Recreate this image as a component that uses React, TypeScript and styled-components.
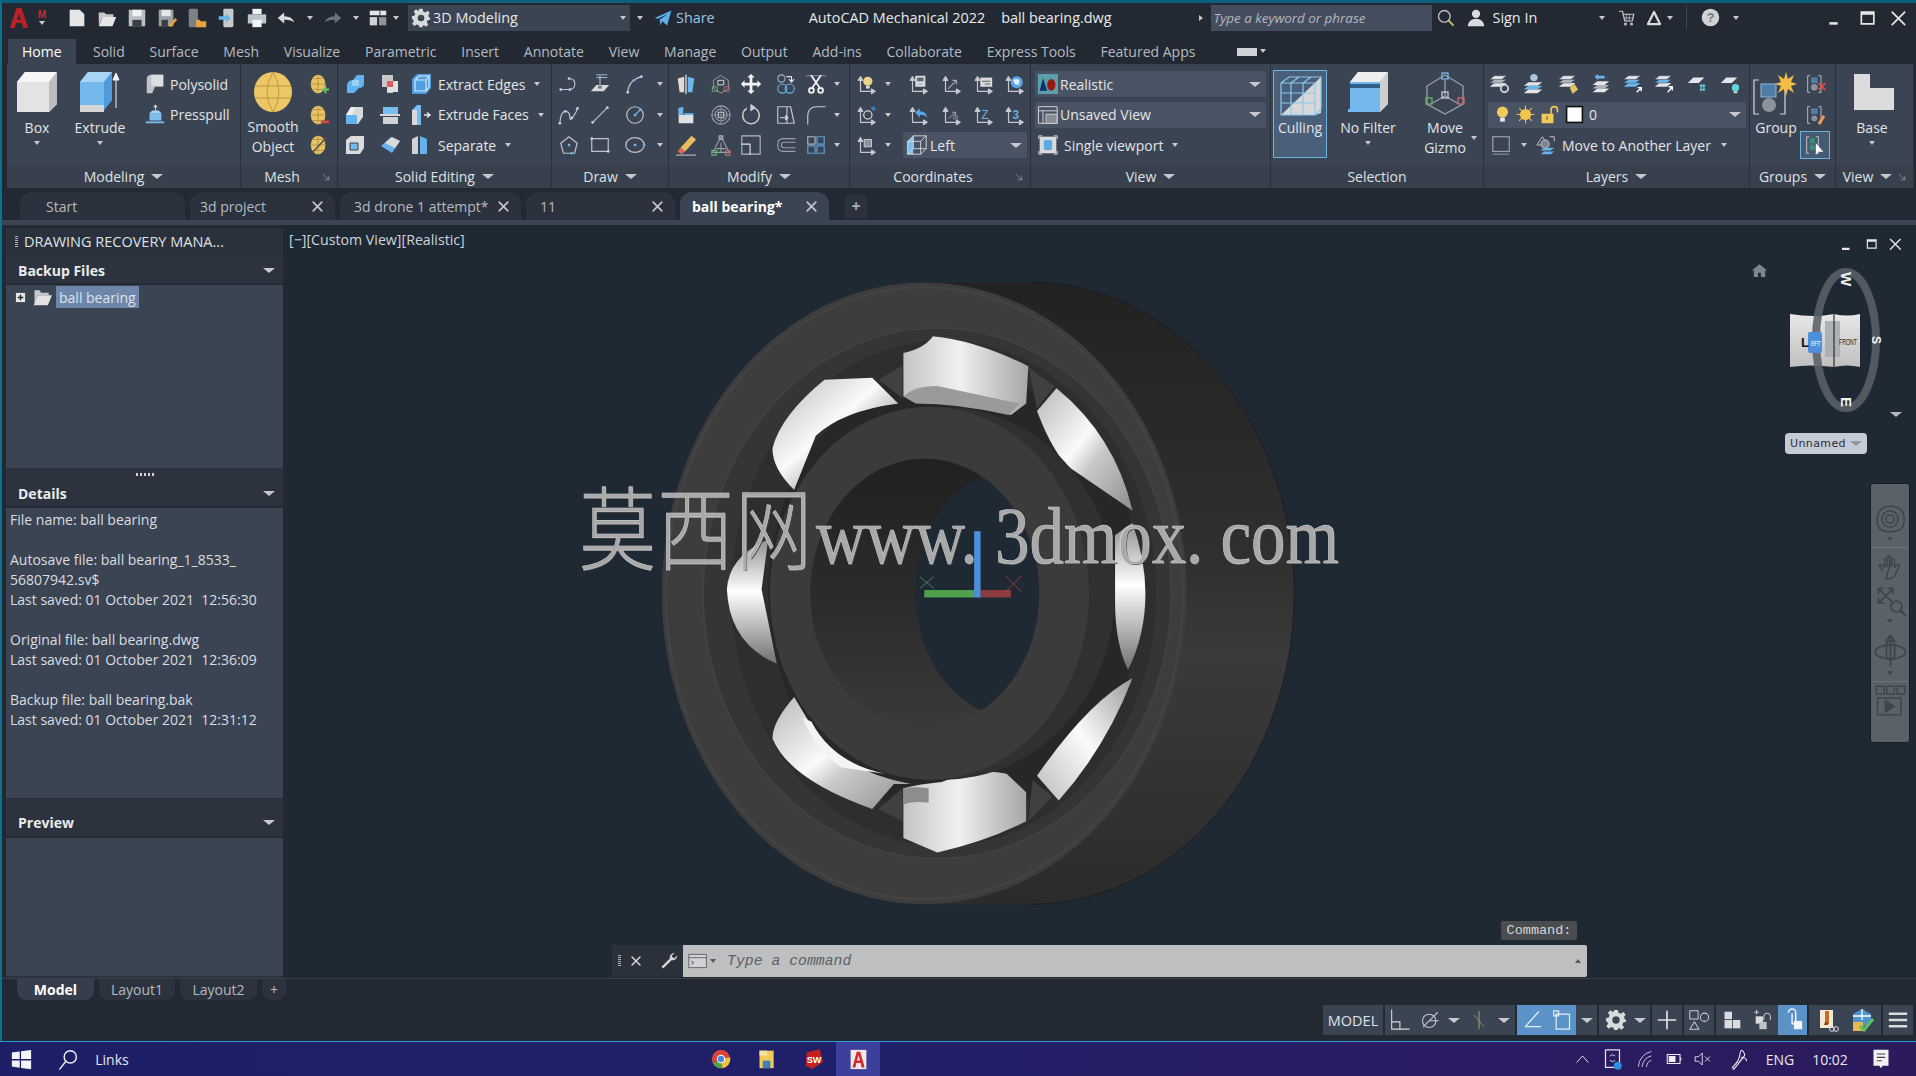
import React from "react";
import styled, { createGlobalStyle } from "styled-components";

const GlobalStyle = createGlobalStyle`
  html, body {
    margin: 0;
    padding: 0;
    background: #222933;
    overflow: hidden;
  }
  * {
    box-sizing: border-box;
  }
`;

const UI_FONT = `"Open Sans", "Noto Sans", "Liberation Sans", sans-serif`;

const Window = styled.div`
  width: 1916px;
  height: 1076px;
  display: flex;
  flex-direction: column;
  background: #222933;
  font-family: ${UI_FONT};
  font-size: 14px;
  color: #dfe2e6;
  overflow: hidden;
`;
const Frame = styled.div`
  height: 1041px;
  display: flex;
  flex-direction: column;
  border-top: 3px solid #0d5f80;
  border-left: 2px solid #0f6f8e;
`;

/* title bar */
const TitleBar = styled.div`
  height: 29px;
  display: flex;
  align-items: center;
  flex-shrink: 0;
`;
const Gap = styled.span<{ $w: number }>`
  width: ${(p) => p.$w}px;
  flex-shrink: 0;
`;
const VGap = styled.div<{ $h: number }>`
  height: ${(p) => p.$h}px;
  flex-shrink: 0;
`;
const Slot = styled.span<{ $w: number }>`
  width: ${(p) => p.$w}px;
  height: 24px;
  flex-shrink: 0;
  display: flex;
  align-items: center;
  justify-content: center;
`;
const Caret = styled.i<{ $c?: string; $big?: boolean }>`
  display: inline-block;
  flex-shrink: 0;
  border-left: ${(p) => (p.$big ? 6 : 3.5)}px solid transparent;
  border-right: ${(p) => (p.$big ? 6 : 3.5)}px solid transparent;
  border-top: ${(p) => (p.$big ? 5 : 4)}px solid ${(p) => p.$c || "#c6c9cd"};
`;
const RightCaret = styled(Caret)`
  transform: rotate(-90deg);
`;
const LogoMark = styled.span`
  width: 26px;
  display: flex;
  flex-direction: column;
  align-items: center;
  gap: 1px;
  flex-shrink: 0;
`;
const LogoLetter = styled.span`
  font-family: "Liberation Sans", sans-serif;
  font-size: 10px;
  line-height: 10px;
  font-weight: 700;
  color: #c8282e;
`;
const WorkspaceBox = styled.div`
  width: 222px;
  height: 26px;
  display: flex;
  align-items: center;
  padding: 0 4px 0 3px;
  background: #3b4453;
  color: #e6e8ea;
  font-size: 14.4px;
`;
const TitleText = styled.span`
  font-size: 14.4px;
  color: #e8eaec;
  white-space: nowrap;
`;
const TitleSeparator = styled.span`
  width: 1px;
  height: 24px;
  flex-shrink: 0;
  background: #3b4453;
`;
const SearchBox = styled.div`
  width: 221px;
  height: 26px;
  display: flex;
  align-items: center;
  padding-left: 3px;
  background: #444d5e;
  font-style: italic;
  font-size: 13.4px;
  color: #b4b9c0;
`;
const ShareText = styled.span`
  color: #9cc4e4;
  font-size: 14.4px;
`;

/* ribbon tabs */
const RibbonTabs = styled.div`
  height: 32px;
  display: flex;
  align-items: flex-end;
  padding-left: 6px;
  flex-shrink: 0;
`;
const RibbonTab = styled.div<{ $active?: boolean }>`
  height: 25px;
  display: flex;
  align-items: center;
  font-size: 14px;
  white-space: nowrap;
  margin-right: ${(p) => (p.$active ? 5 : 0)}px;
  padding: 0 ${(p) => (p.$active ? 14 : 12.4)}px;
  background: ${(p) => (p.$active ? "#3b4453" : "transparent")};
  color: ${(p) => (p.$active ? "#ffffff" : "#b5bac2")};
`;
const CollapseSlot = styled(Slot)`
  margin-left: 26px;
`;
const CollapseBox = styled.span`
  width: 20px;
  height: 8px;
  display: block;
  background: #cfd1d4;
`;
const CollapseCaret = styled(Caret)`
  align-self: center;
  margin-top: 6px;
`;

/* ribbon */
const Ribbon = styled.div`
  height: 124px;
  display: flex;
  padding-left: 5px;
  flex-shrink: 0;
`;
const Panel = styled.div<{ $w: number }>`
  width: ${(p) => p.$w}px;
  flex-shrink: 0;
  display: flex;
  flex-direction: column;
  background: #3b4453;
  border-right: 1px solid #2a303b;
`;
const PanelBody = styled.div`
  height: 101px;
  display: flex;
  overflow: visible;
`;
const PanelRows = styled.div<{ $w?: number; $pl?: number }>`
  display: flex;
  flex-direction: column;
  padding-top: 5px;
  padding-left: ${(p) => p.$pl || 0}px;
  width: ${(p) => (p.$w ? p.$w + "px" : "100%")};
  flex-shrink: 0;
`;
const Row = styled.div`
  height: 30.5px;
  display: flex;
  align-items: center;
  white-space: nowrap;
`;
const RowLabel = styled.span<{ $ml?: number; $mr?: number }>`
  font-size: 14px;
  color: #e2e4e7;
  margin-left: ${(p) => p.$ml || 0}px;
  margin-right: ${(p) => p.$mr || 0}px;
`;
const PanelFooter = styled.div<{ $launcher?: boolean }>`
  position: relative;
  height: 23px;
  display: flex;
  align-items: center;
  justify-content: center;
  gap: 7px;
  padding-right: ${(p) => (p.$launcher ? 14 : 0)}px;
  font-size: 14px;
  color: #dfe2e5;
  background: #38404e;
`;
const Launcher = styled.span`
  position: absolute;
  right: 6px;
  top: 8px;
  display: flex;
`;
const BigButton = styled.div<{ $w: number; $ml?: number }>`
  width: ${(p) => p.$w}px;
  margin-left: ${(p) => p.$ml || 0}px;
  flex-shrink: 0;
  display: flex;
  flex-direction: column;
  align-items: center;
  padding-top: 8px;
  font-size: 14px;
  line-height: 20px;
  color: #e2e4e7;
  text-align: center;
`;
const BigLabel = styled.div<{ $mt?: number }>`
  margin-top: ${(p) => p.$mt ?? 6}px;
  margin-bottom: 3px;
`;
const CullingButton = styled(BigButton)`
  height: 88px;
  margin-top: 6px;
  padding-top: 2px;
  background: #4a5f7a;
  border: 1px solid #6db3e0;
`;
const GizmoCaret = styled(Caret)`
  margin: 72px 0 0 -10px;
`;
const Combo = styled.div<{ $w: number; $ml?: number }>`
  width: ${(p) => p.$w}px;
  margin-left: ${(p) => p.$ml || 0}px;
  height: 26px;
  flex-shrink: 0;
  display: flex;
  align-items: center;
  padding: 0 5px 0 3px;
  background: #4a5363;
  border-radius: 2px;
  font-size: 14px;
  color: #e4e6e9;
`;
const ComboText = styled.span`
  flex: 1;
  margin-left: 2px;
`;
const SelectedBox = styled.span`
  width: 30px;
  height: 28px;
  margin-left: -2px;
  display: flex;
  align-items: center;
  justify-content: center;
  border: 1px solid #6db3e0;
  background: #465a74;
`;
const ViewportSlot = styled(Slot)`
  margin-left: 3px;
`;

/* document tabs */
const DocBar = styled.div`
  height: 37px;
  flex-shrink: 0;
  display: flex;
  gap: 5px;
  padding: 4px 0 0 18px;
  border-bottom: 5px solid #3b4453;
`;
const DocTab = styled.div<{ $w: number; $pl: number; $active?: boolean }>`
  width: ${(p) => p.$w}px;
  height: 28px;
  padding: 0 11px 0 ${(p) => p.$pl}px;
  display: flex;
  align-items: center;
  justify-content: space-between;
  border-radius: 12px 12px 0 0;
  white-space: nowrap;
  font-size: 14px;
  font-weight: ${(p) => (p.$active ? 700 : 400)};
  color: ${(p) => (p.$active ? "#ffffff" : "#b5bac2")};
  background: ${(p) => (p.$active ? "#3b4453" : "#2b323d")};
`;
const AddTab = styled.div`
  width: 22px;
  height: 24px;
  margin: 2px 0 0 11px;
  display: flex;
  align-items: center;
  justify-content: center;
  border-radius: 8px 8px 0 0;
  background: #2b323d;
  color: #aab0b8;
  font-weight: 700;
  font-size: 16px;
`;

/* main area */
const Main = styled.div`
  height: 753px;
  flex-shrink: 0;
  display: flex;
`;
const SidePanel = styled.div`
  width: 277px;
  margin: 3px 4px 0 4px;
  flex-shrink: 0;
  display: flex;
  flex-direction: column;
  background: #2c333e;
`;
const PanelTitle = styled.div`
  height: 27px;
  display: flex;
  align-items: center;
  gap: 6px;
  padding-left: 9px;
  margin-bottom: 3px;
  font-size: 14.5px;
  color: #dfe2e5;
  background: #2a313c;
`;
const Grip = styled.span`
  width: 3px;
  height: 12px;
  flex-shrink: 0;
  background: repeating-linear-gradient(#aeb2b8 0 1px, transparent 1px 2px);
`;
const SectionHeader = styled.div<{ $h: number }>`
  height: ${(p) => p.$h}px;
  flex-shrink: 0;
  display: flex;
  align-items: center;
  justify-content: space-between;
  padding: 0 8px 0 12px;
  font-weight: 700;
  font-size: 14px;
  color: #e9ebed;
  background: #2c333e;
`;
const SectionBody = styled.div<{ $h: number }>`
  height: ${(p) => p.$h}px;
  flex-shrink: 0;
  background: #3b4453;
  border-top: 2px solid #252b35;
`;
const TreeRow = styled.div`
  display: flex;
  align-items: center;
  height: 24px;
  padding-left: 9px;
`;
const TreeSelected = styled.span`
  height: 22px;
  padding: 0 3px;
  margin-left: 4px;
  display: flex;
  align-items: center;
  background: #6e86a9;
  color: #dde2e9;
`;
const Sash = styled.div`
  height: 12px;
  flex-shrink: 0;
  display: flex;
  align-items: center;
  justify-content: center;
  background: #2c333e;
  gap: 2px;
`;
const SashDot = styled.i`
  width: 2px;
  height: 3px;
  background: #d3d6da;
`;
const DetailLine = styled.div`
  min-height: 20px;
  line-height: 20px;
  padding-left: 4px;
  font-size: 14px;
  color: #dadde1;
  white-space: pre;
`;
const DetailsText = styled.div`
  padding: 2px 0 0 0;
`;

/* viewport */
const Viewport = styled.div`
  position: relative;
  flex: 1;
  background: #1f2934;
  overflow: hidden;
`;
const ViewLabel = styled.div`
  position: absolute;
  left: 2px;
  top: 5px;
  font-size: 14.2px;
  color: #d0d4d9;
`;
const BearingWrap = styled.div`
  position: absolute;
  left: 351px;
  top: 45px;
  width: 690px;
  height: 650px;
`;
const Watermark = styled.div`
  position: absolute;
  left: 292px;
  top: 243px;
  display: flex;
  align-items: baseline;
  white-space: pre;
  font-family: "Liberation Serif", "Noto Sans CJK SC", serif;
  color: rgba(205, 205, 205, 0.72);
  -webkit-text-stroke: 0.5px #d4d4d4;
  text-shadow: 1px 1px 0 #4b4b4b;
  transform: scaleY(1.18);
`;
const WatermarkCjk = styled.span`
  font-size: 77px;
  font-weight: 300;
  letter-spacing: 1px;
`;
const WatermarkLatin = styled.span`
  font-size: 68.8px;
  margin-left: 3px;
`;
const ViewportControls = styled.div`
  position: absolute;
  right: 13px;
  top: 10px;
  display: flex;
  gap: 8px;
  align-items: center;
`;
const HomeIcon = styled.div`
  position: absolute;
  left: 1464px;
  top: 37px;
`;
const CubeWrap = styled.div`
  position: absolute;
  left: 1498px;
  top: 39px;
`;
const Unnamed = styled.div`
  position: absolute;
  left: 1498px;
  top: 208px;
  width: 82px;
  height: 21px;
  display: flex;
  align-items: center;
  justify-content: space-between;
  padding: 0 5px;
  background: #c6cad6;
  border-radius: 4px;
  font-family: "DejaVu Sans", sans-serif;
  font-size: 11px;
  letter-spacing: 0.4px;
  color: #2b2f38;
`;
const CubeMenu = styled.div`
  position: absolute;
  left: 1603px;
  top: 177px;
`;
const NavBar = styled.div`
  position: absolute;
  left: 1583px;
  top: 258px;
  width: 40px;
  height: 260px;
  display: flex;
  flex-direction: column;
  align-items: center;
  padding-top: 21px;
  background: #596169;
  border: 1px solid #161c23;
  border-radius: 3px;
`;
const NavSeparator = styled.div<{ $mb: number }>`
  width: 100%;
  height: 1px;
  flex-shrink: 0;
  margin: 2px 0 ${(p) => p.$mb}px;
  background: #6a727a;
`;
const NavCaret = styled.div`
  height: 12px;
  flex-shrink: 0;
  display: flex;
  align-items: center;
`;
const CommandHint = styled.div`
  position: absolute;
  left: 1214px;
  top: 696px;
  width: 76px;
  height: 19px;
  display: flex;
  align-items: center;
  justify-content: center;
  background: #4a4d50;
  border-radius: 2px;
  font-family: "Liberation Mono", monospace;
  font-size: 13.5px;
  color: #d4d6d8;
`;
const CommandLine = styled.div`
  position: absolute;
  left: 325px;
  top: 720px;
  width: 975px;
  height: 32px;
  display: flex;
`;
const CommandHandle = styled.div`
  width: 71px;
  display: flex;
  align-items: center;
  padding-left: 6px;
  gap: 7px;
  background: #2a313b;
`;
const CommandInput = styled.div`
  flex: 1;
  display: flex;
  align-items: center;
  padding: 0 6px 0 5px;
  background: #bdbfc1;
  font-family: "Liberation Mono", monospace;
  font-style: italic;
  font-size: 14.8px;
  color: #5c5f63;
  border-radius: 0 2px 2px 0;
`;
const UpCaret = styled(Caret)`
  margin-left: auto;
  transform: rotate(180deg);
`;

/* bottom */
const BottomBar = styled.div`
  height: 63px;
  flex-shrink: 0;
  display: flex;
  justify-content: space-between;
  border-top: 1px solid #39404b;
`;
const LayoutTabs = styled.div`
  display: flex;
  gap: 5px;
  padding: 0 0 0 15px;
  height: 23px;
`;
const LayoutTab = styled.div<{ $active?: boolean; $w: number }>`
  width: ${(p) => p.$w}px;
  height: 21px;
  display: flex;
  align-items: center;
  justify-content: center;
  border-radius: 0 0 9px 9px;
  font-size: 14px;
  font-weight: ${(p) => (p.$active ? 700 : 400)};
  color: ${(p) => (p.$active ? "#ffffff" : "#b5bac2")};
  background: ${(p) => (p.$active ? "#363e4c" : "#2c333e")};
`;
const StatusBar = styled.div`
  display: flex;
  gap: 2px;
  height: 30px;
  margin: 26px 3px 0 0;
`;
const StatusGroup = styled.div<{ $w: number }>`
  width: ${(p) => p.$w}px;
  display: flex;
  align-items: center;
  background: #3b4453;
`;
const StatusButton = styled.span<{ $w: number; $active?: boolean }>`
  width: ${(p) => p.$w}px;
  height: 30px;
  flex-shrink: 0;
  display: flex;
  align-items: center;
  justify-content: center;
  font-size: 14.5px;
  background: ${(p) => (p.$active ? "#5b93c9" : "transparent")};
`;

/* taskbar */
const Taskbar = styled.div`
  height: 35px;
  flex-shrink: 0;
  display: flex;
  align-items: center;
  border-top: 1px solid #2f9bdc;
  background: linear-gradient(90deg, #1c1f66 0%, #20206a 45%, #2a1b63 75%, #2c1a5c 100%);
  color: #e8e8f0;
`;
const TaskActive = styled.span`
  width: 44px;
  height: 34px;
  display: flex;
  align-items: center;
  justify-content: center;
  background: #3d3f9c;
`;
const TrayText = styled.span<{ $w: number }>`
  width: ${(p) => p.$w}px;
  font-size: 14px;
  text-align: center;
  flex-shrink: 0;
`;
const IconSvg = styled.svg`
  display: block;
  overflow: visible;
  flex-shrink: 0;
`;

/* icon drawings */
const L: React.FC<{ c?: string; w?: number; children: React.ReactNode }> = ({ c = "#c0c4ca", w = 1.3, children }) => (
  <g fill="none" stroke={c} strokeWidth={w} strokeLinecap="round" strokeLinejoin="round">
    {children}
  </g>
);
const B = "#6bb5ea";
const W = "#e3e5e7";
const G = "#aeb3ba";
const Y = "#e7c463";
const Dot = ({ x, y, c = "#b9d4ea" }: { x: number; y: number; c?: string }) => <circle cx={x} cy={y} r="1.5" fill={c} stroke="none" />;

const Axes = (
  <L c="#c5c9ce" w={1.3}>
    <path d="M6 6V20H20" />
    <path d="M3.5 8 6 4 8.5 8Z M18 17.5 22 20 18 22.5Z" fill="#c5c9ce" />
  </L>
);
const Stack = ({ c1 = W, c2 = G, c3 = W }: { c1?: string; c2?: string; c3?: string }) => (
  <>
    <path d="M2 15 7 11H20L15 15Z" fill={c3} />
    <path d="M2 11 7 7H20L15 11Z" fill={c2} stroke="#3b4453" strokeWidth=".5" />
    <path d="M2 7 7 3H20L15 7Z" fill={c1} stroke="#3b4453" strokeWidth=".5" />
  </>
);
const Mesh = ({ badge }: { badge?: React.ReactNode }) => (
  <>
    <ellipse cx="11" cy="12" rx="8" ry="10" fill={Y} />
    <L c="#a9873a" w={0.8}>
      <path d="M11 2V22M3 12H19M5 6H17M5 18H17" />
    </L>
    {badge}
  </>
);

const ICONS: Record<string, React.ReactNode> = {
  fnew: <path d="M4 3H15L20 8V21H4Z" fill="#e6e6e6" />,
  fopen: (
    <>
      <path d="M3 6H9L11 8H19V11H7L3 20Z" fill="#c9c9c9" />
      <path d="M7 11H22L18 21H3Z" fill="#e6e6e6" />
    </>
  ),
  fsave: (
    <>
      <path d="M3 3H21V21H3Z" fill="#bdbfc2" />
      <path d="M7 3H17V10H7Z" fill="#f0f0f0" />
      <path d="M7 14H17V21H7Z" fill="#3a3f47" />
    </>
  ),
  fsaveas: (
    <>
      <path d="M3 3H19V21H3Z" fill="#9ea2a7" />
      <path d="M6 3H16V10H6Z" fill="#e6e6e6" />
      <path d="M6 14H13V21H6Z" fill="#3a3f47" />
      <path d="M14 20 21 12 23 14 16 22Z" fill="#e8a33c" />
    </>
  ),
  fcloud: (
    <>
      <rect x="3" y="2" width="10" height="20" rx="1.5" fill="#7c8087" />
      <path d="M11 14H15L16 15.5H22V22H11Z" fill="#e8a33c" />
    </>
  ),
  fimport: (
    <>
      <rect x="8" y="2" width="11" height="20" rx="1.5" fill="#c9c9c9" />
      <path d="M3 10H11V7L16 12L11 17V14H3Z" fill={B} />
    </>
  ),
  fprint: (
    <>
      <path d="M7 2H17V8H7Z" fill="#f0f0f0" />
      <path d="M2 8H22V18H2Z" fill="#bcc4cc" />
      <path d="M7 14H17V22H7Z" fill="#f4f4f4" />
    </>
  ),
  undo: <path d="M3 12 10 6V10Q19 10 21 17Q17 13.5 10 14V18Z" fill="#d7dadd" />,
  redo: <path d="M21 12 14 6V10Q5 10 3 17Q7 13.5 14 14V18Z" fill="#6c727a" />,
  wspace: (
    <>
      <path d="M3 4H21V9H3Z" fill="#e3e5e7" />
      <path d="M3 11H11V20H3Z" fill="#d0d2d5" />
      <path d="M13 11H21V20H13Z" fill="#8e939a" />
      <path d="M14 4 14 9" stroke="#333" />
    </>
  ),
  gear: (
    <>
      <path
        d="M10 1H14L14.6 4.2 17.2 5.3 19.9 3.4 22.6 6.1 20.7 8.8 21.8 11.4 23 12 23 14 20 14.6 18.9 17.2 20.8 19.9 18.1 22.6 15.4 20.7 14 21.4 14 23H10L9.4 20.8 6.8 19.7 4.1 21.6 1.4 18.9 3.3 16.2 2.2 13.6 1 13V10L4 9.4 5.1 6.8 3.2 4.1 5.9 1.4 8.6 3.3 9.4 3Z"
        fill="#d8dadc"
      />
      <circle cx="12" cy="12" r="4" fill="#3b4453" />
    </>
  ),
  plane: <path d="M2 12 22 3 17 21 11 16 9 21 8 14 18 7 6 13Z" fill="#5fb0e6" />,
  search: (
    <>
      <circle cx="10" cy="10" r="7" fill="none" stroke="#b9bec4" strokeWidth="1.6" />
      <path d="M15 15 21 21" stroke="#d5b35a" strokeWidth="2.2" />
    </>
  ),
  user: (
    <>
      <circle cx="12" cy="7" r="5" fill="#d9dbde" />
      <path d="M2 22Q3 13 12 13T22 22Z" fill="#d9dbde" />
    </>
  ),
  cart: (
    <L c="#c4c7cb" w={1.6}>
      <path d="M2 3H6L9 16H19L21 7H7" />
      <path d="M9 12H20M11 7V16M15 7V16" strokeWidth="1" />
      <circle cx="10" cy="20" r="1.3" />
      <circle cx="18" cy="20" r="1.3" />
    </L>
  ),
  a360: (
    <L c="#d9dbde" w={3}>
      <path d="M12 4 4 20H20Z" />
    </L>
  ),
  help: (
    <>
      <circle cx="12" cy="12" r="10" fill="#cfd1d4" />
      <text x="12" y="17" textAnchor="middle" fontSize="14" fontWeight="700" fontFamily="Liberation Sans" fill="#777">
        ?
      </text>
    </>
  ),
  winMin: <path d="M4 17H14V20H4Z" fill="#e8e8e8" />,
  winMax: <path d="M3 4H20V20H3Z M5 8V18H18V8Z" fill="#e8e8e8" fillRule="evenodd" />,
  winClose: (
    <L c="#e8e8e8" w={2}>
      <path d="M5 5 20 20M20 5 5 20" />
    </L>
  ),
  tabClose: (
    <L c="#c5c9ce" w={3}>
      <path d="M4 4 20 20M20 4 4 20" />
    </L>
  ),
  polysolid: (
    <>
      <path d="M3 22V7Q3 2 8 2H21V15H12L9 22Z" fill="#bfc3c7" />
      <path d="M8 2H21V14H11Q8 14 8 10Z" fill="#dedfe1" />
    </>
  ),
  presspull: (
    <>
      <path d="M6 10H19V18H6Z" fill="#7fbdec" />
      <path d="M9 7H16L19 10H6Z" fill="#a8d4f3" />
      <path d="M12.5 1V7M10.5 4 12.5 1 14.5 4" stroke="#e6e6e6" fill="none" />
      <path d="M2 20H22" stroke="#7fbdec" strokeWidth="2" />
    </>
  ),
  meshAdd: <Mesh badge={<path d="M15 17H18V14H20V17H23V19H20V22H18V19H15Z" fill="#6fc55c" />} />,
  meshSub: <Mesh badge={<path d="M14 18H23V21H14Z" fill="#d0494a" />} />,
  meshEdit: (
    <Mesh
      badge={
        <L c="#4a4f58" w={1.6}>
          <path d="M5 20 20 4" />
        </L>
      }
    />
  ),
  se1: (
    <>
      <path d="M4 14Q4 8 10 8L14 3H21V12Q21 16 16 16L11 21H4Z" fill="#63b3f0" />
      <path d="M9 8H16V14H9Z" fill="#9cd0f5" />
    </>
  ),
  se2: (
    <>
      <path d="M4 3H15V21H9V15H4Z" fill="#c9c9c9" />
      <path d="M9 9H20V20H9Z" fill="#e0e0e0" />
      <path d="M9 9H15V15H9Z" fill="#e05a5a" />
    </>
  ),
  se3: (
    <>
      <path d="M3 12 8 4H20V14L15 21H3Z" fill="#d8d8d8" />
      <path d="M3 12H14V21H3Z" fill="#63b3f0" />
      <path d="M3 12 8 4H12L9 12Z" fill="#eeeeee" />
    </>
  ),
  se4: (
    <>
      <path d="M5 4H20V11H5Z" fill="#76bdf2" />
      <path d="M2 12H22" stroke="#d8d8d8" strokeWidth="2" />
      <path d="M5 14H20V21H5Z" fill="#cfd3d8" />
    </>
  ),
  se5: (
    <>
      <path d="M3 7 8 3H21V15L17 21H3Z" fill="#dcdcdc" />
      <path d="M7 10H15V17H7Z" fill="#73b9ee" stroke="#3b4453" />
    </>
  ),
  se6: (
    <>
      <path d="M3 13 13 4 22 8 14 20Z" fill="#66b2ec" />
      <path d="M7 10 14 4 22 8 17 15Z" fill="#dadada" />
    </>
  ),
  extract: (
    <>
      <path d="M3 7 8 2H22V16L17 22H3Z" fill="#4f9ee0" />
      <L c="#d2e7f8" w={1.2}>
        <path d="M6 8H17V19H6ZM6 8 10 4H20V15L17 19M17 8 20 4" />
      </L>
    </>
  ),
  extfaces: (
    <>
      <path d="M3 22V7L8 2H12V22Z" fill="#74bbf0" />
      <path d="M3 7H8V22H3Z" fill="#dadada" />
      <path d="M15 12H20M18 9.5 21 12 18 14.5" stroke="#e6e6e6" fill="none" strokeWidth="1.5" />
    </>
  ),
  separate: (
    <>
      <path d="M3 6 9 3V21H3Z" fill="#d0d3d6" />
      <path d="M11 3 18 6V21H11Z" fill="#66b2ec" />
    </>
  ),
  d1: (
    <L>
      <path d="M3 18H13Q20 17 18 9 Q16 6 12 6" />
      <Dot x={3} y={18} />
      <Dot x={13} y={18} />
      <Dot x={12} y={6} />
    </L>
  ),
  d2: (
    <>
      <path d="M2 20 8 13H22L16 20Z" fill="#d7d9dc" />
      <path d="M12 3V14" stroke="#aaa" strokeWidth="1.5" />
      <path d="M8 2H20M8 5H20" stroke="#9ec6e6" strokeWidth="1" />
      <path d="M10 14H14V17H10Z" fill="#777" />
    </>
  ),
  d3: (
    <L>
      <path d="M4 21Q5 8 19 4" />
      <Dot x={4} y={21} />
      <Dot x={11} y={8} c={B} />
      <Dot x={19} y={4} />
    </L>
  ),
  d4: (
    <L>
      <path d="M2 21Q3 8 8 8T13 15 T22 4" />
      <Dot x={2} y={21} />
      <Dot x={8} y={8} />
      <Dot x={15} y={15} />
      <Dot x={21} y={5} />
    </L>
  ),
  d5: (
    <L w={1.2}>
      <path d="M4 20 20 4" />
      <Dot x={4} y={20} />
      <Dot x={20} y={4} />
    </L>
  ),
  d6: (
    <L>
      <circle cx="12" cy="12" r="9" />
      <path d="M12 12 18 6" stroke={B} />
      <Dot x={12} y={12} c={B} />
      <Dot x={18} y={6} c={B} />
    </L>
  ),
  d7: (
    <L>
      <path d="M12 3 21 10 18 21H6L3 10Z" />
      <Dot x={12} y={12} c={B} />
      <Dot x={15} y={21} c={B} />
    </L>
  ),
  d8: (
    <L>
      <path d="M3 5H21V19H3Z" />
      <Dot x={3} y={5} />
      <Dot x={21} y={19} />
    </L>
  ),
  d9: (
    <L>
      <ellipse cx="12" cy="12" rx="10" ry="8" />
      <Dot x={12} y={12} c={B} />
      <Dot x={22} y={12} c={B} />
    </L>
  ),
  m1: (
    <>
      <path d="M3 6 10 4V21H5Z" fill="#e4d9d0" />
      <path d="M14 4 21 6 19 21H14Z" fill="#6bb5ea" />
      <path d="M12 2V23" stroke="#fff" strokeWidth="1.2" />
    </>
  ),
  m2: (
    <L c="#9aa0a8" w={1}>
      <path d="M12 3 20 8V17L12 22 4 17V8Z" />
      <path d="M9 8H15V13H9Z" stroke={W} />
      <rect x="3" y="15" width="5" height="5" stroke="#69b86a" />
      <rect x="16" y="15" width="5" height="5" stroke="#c96a6a" />
    </L>
  ),
  move: <path d="M12 1 16 5H13.5V10.5H19V8L23 12 19 16V13.5H13.5V19H16L12 23 8 19H10.5V13.5H5V16L1 12 5 8V10.5H10.5V5H8Z" fill="#f2f3f4" />,
  m4: (
    <L c="#aeb3ba" w={1.2}>
      <circle cx="7" cy="6" r="4" />
      <path d="M13 4H18V9M15.5 7 18 10 20.5 7" stroke={W} />
      <circle cx="8" cy="17" r="5" stroke={B} />
      <circle cx="16" cy="17" r="5" stroke={B} />
    </L>
  ),
  trim: (
    <>
      <path d="M1 3H23" stroke="#8f959c" strokeWidth="1" />
      <L c="#eeeeee" w={2}>
        <path d="M7 3 16 16M17 3 8 16" />
        <circle cx="7" cy="19" r="2.6" />
        <circle cx="17" cy="19" r="2.6" />
      </L>
    </>
  ),
  m6: (
    <>
      <path d="M4 4 8 8V12H20V21H4Z" fill="#dfe1e3" />
      <path d="M4 4 9 3V12H4Z" fill="#6bb5ea" />
      <path d="M10 11H20" stroke="#6bb5ea" strokeWidth="2" />
    </>
  ),
  m7: (
    <L c="#9aa0a8" w={1.2}>
      <circle cx="12" cy="12" r="10" />
      <circle cx="12" cy="12" r="6.5" />
      <path d="M2 12H22M12 2V22" strokeWidth=".8" />
      <rect x="9" y="9" width="6" height="6" stroke="#c9cdd2" />
    </L>
  ),
  rotate: (
    <L c="#c9cdd2" w={1.5}>
      <path d="M15 4A9 9 0 1 1 7 5" />
      <path d="M12 1 16 4 12 7Z" fill="#c9cdd2" />
    </L>
  ),
  m9: (
    <L>
      <path d="M3 3H13V21H3ZM13 3H17L21 21H13" />
      <path d="M6 15H14M11.5 13 14 15 11.5 17" stroke={W} />
    </L>
  ),
  fillet: (
    <L c="#c9cdd2" w={1.2}>
      <path d="M3 22V13Q3 3 13 3H22" />
    </L>
  ),
  eraser: (
    <>
      <path d="M6 15 18 2 23 6 11 19Z" fill="#e7bd58" />
      <path d="M6 15 11 19 7 22 3 19Z" fill="#dd6a52" />
      <path d="M1 23H23" stroke="#d5d7da" />
    </>
  ),
  m12: (
    <L c="#9aa0a8" w={1.2}>
      <path d="M12 3 21 20H3Z" />
      <rect x="10" y="2" width="4" height="4" stroke={G} />
      <rect x="2" y="18" width="5" height="5" stroke="#69b86a" />
      <rect x="17" y="18" width="5" height="5" stroke="#c96a6a" />
      <path d="M12 10V20M7 16H17" />
    </L>
  ),
  m13: (
    <L c="#b5bac0" w={1.2}>
      <path d="M2 2H22V22H2Z" />
      <path d="M2 11H11V22" stroke={W} />
    </L>
  ),
  m14: (
    <L c="#9aa0a8" w={1.2}>
      <path d="M22 5H9Q3 5 3 12T9 19H22" />
      <path d="M22 9H10Q7 9 7 12T10 15H22" />
    </L>
  ),
  m15: (
    <L c="#5f9fd2" w={1.3}>
      <rect x="3" y="3" width="8" height="8" stroke={G} />
      <rect x="13" y="3" width="8" height="8" />
      <rect x="3" y="13" width="8" height="8" />
      <rect x="13" y="13" width="8" height="8" />
    </L>
  ),
  launcher: (
    <L c="#c9cdd2" w={1.2}>
      <path d="M3 3 18 18M18 8V18H8" />
    </L>
  ),
  c1: (
    <>
      {Axes}
      <circle cx="14" cy="9" r="5" fill="#efd58a" />
      <path d="M12 14H16V17H12Z" fill="#ddd" />
    </>
  ),
  c2: (
    <>
      {Axes}
      <path d="M9 3H20V15H9Z" fill="#d8dadd" />
      <path d="M11 5H18V9H11Z" fill="#5f6773" />
      <path d="M12 12H17" stroke={B} />
    </>
  ),
  c3: (
    <>
      {Axes}
      <L c="#a9adb3" w={1.2}>
        <path d="M9 17 18 8M14 8H18V12" />
      </L>
    </>
  ),
  c4: (
    <>
      {Axes}
      <path d="M9 5H22V15H9Z" fill="#d8dadd" />
      <path d="M11 9H20M14 12H20" stroke="#555" />
    </>
  ),
  c5: (
    <>
      {Axes}
      <circle cx="15" cy="10" r="6.5" fill="#5aa8e4" />
      <path d="M11 8Q15 5 18 8L17 13 13 12Z" fill="#e0eef8" />
    </>
  ),
  c6: (
    <>
      {Axes}
      <circle cx="14" cy="12" r="4.5" fill="none" stroke="#cfd2d6" strokeWidth="1.4" />
      <path d="M18 3H22V7H18Z" fill="#3d7fb8" />
    </>
  ),
  c7: (
    <>
      {Axes}
      <path d="M9 9 14 5V8Q21 8 22 15Q19 11 14 12V15Z" fill="#5aa8e4" />
    </>
  ),
  c8: (
    <>
      {Axes}
      <path d="M9 16 17 9M13 9H17V13" stroke="#a9adb3" fill="none" />
      <path d="M14 12H20V17H14Z" fill="#808792" opacity=".6" />
    </>
  ),
  c9: (
    <>
      {Axes}
      <text x="14" y="16" textAnchor="middle" fontSize="13" fontFamily="Liberation Sans" fill="#6aaede">
        Z
      </text>
    </>
  ),
  c10: (
    <>
      {Axes}
      <text x="14" y="16" textAnchor="middle" fontSize="13" fontWeight="700" fontFamily="Liberation Sans" fill="#6aaede">
        3
      </text>
    </>
  ),
  c11: (
    <>
      {Axes}
      <path d="M10 6H18V14H10Z" fill="#8d939c" stroke="#cfd2d6" />
    </>
  ),
  cubeLeft: (
    <>
      <path d="M2 8 8 2V22L2 22Z" fill="#7fc0ef" />
      <L c="#d5d8dc" w={1}>
        <path d="M2 8H16V22H2ZM2 8 8 2H22V16L16 22M16 8 22 2M8 2V16H22M8 16 2 22" />
      </L>
    </>
  ),
  styleReal: (
    <>
      <rect width="24" height="24" fill="#5aa0a8" />
      <path d="M6 5 11 20H2Z" fill="#0b2e6f" />
      <ellipse cx="16" cy="13" rx="5" ry="7" fill="#9c1616" />
    </>
  ),
  viewBox: (
    <L c="#cfd1d4" w={1.2}>
      <rect x="1" y="2" width="22" height="20" />
      <path d="M1 7H23M6 7V22" />
      <rect x="10" y="11" width="13" height="11" fill="#8b8d90" />
    </L>
  ),
  viewport: (
    <>
      <rect x="2" y="2" width="20" height="20" fill="#d7d9dc" />
      <rect x="7" y="6" width="10" height="12" rx="2" fill="#5aa8e4" />
      <path d="M1 1H5M1 1V5M23 1H19M23 1V5M1 23H5M1 23V19M23 23H19M23 23V19" stroke="#eee" />
    </>
  ),
  l1: (
    <>
      <Stack />
      <circle cx="18" cy="17" r="4" fill="none" stroke="#cfd2d6" strokeWidth="2" />
    </>
  ),
  l2: (
    <>
      <circle cx="13" cy="5" r="4" fill="#a8c9e6" />
      <path d="M2 14 7 10H22L17 14Z" fill={W} />
      <path d="M2 18 7 14H22L17 18Z" fill="#6bb5ea" />
      <path d="M2 22 7 18H22L17 22Z" fill={W} />
    </>
  ),
  l3: (
    <>
      <Stack />
      <path d="M14 16 19 12 23 18 17 23Z" fill="#e7c463" />
    </>
  ),
  l4: (
    <>
      <path d="M6 4 10 1V3H17V6H10V8Z" fill="#6bb5ea" />
      <path d="M4 13 9 9H22L17 13Z" fill={W} />
      <path d="M4 17 9 13H22L17 17Z" fill={G} />
      <path d="M4 21 9 17H22L17 21Z" fill={W} />
    </>
  ),
  l5: (
    <>
      <Stack c2="#6bb5ea" c3="#6bb5ea" />
      <path d="M16 21 21 16M17 16H21V20" stroke="#fff" fill="none" strokeWidth="1.5" />
    </>
  ),
  l6: (
    <>
      <Stack c1={W} c2="#6bb5ea" c3={W} />
      <path d="M16 21 21 15M17 15H21V19" stroke="#fff" fill="none" strokeWidth="1.5" />
    </>
  ),
  l7: (
    <>
      <path d="M2 11 8 5H20L14 11Z" fill={W} />
      <path d="M15 14H21M15 18H21M16.5 12V20M19.5 12V20" stroke="#61d6e0" strokeWidth="1.3" />
    </>
  ),
  l8: (
    <>
      <path d="M2 11 8 5H20L14 11Z" fill={W} />
      <circle cx="18" cy="16" r="4" fill="#61d6e0" />
      <path d="M16 20H20V22H16Z" fill="#ddd" />
    </>
  ),
  bulb: (
    <>
      <circle cx="12" cy="9" r="7" fill="#f2cb5e" />
      <path d="M9 16H15V21H9Z" fill="#e8e8e8" />
    </>
  ),
  sun: (
    <>
      <path d="M12 1V23M1 12H23M4 4 20 20M20 4 4 20" stroke="#f2c64a" strokeWidth="1.3" />
      <circle cx="12" cy="12" r="7" fill="#f2c64a" />
    </>
  ),
  lock: (
    <>
      <path d="M2 11H17V23H2Z" fill="#f0c85c" />
      <path d="M14 11V6A4 4 0 0 1 22 6V9" fill="none" stroke="#f0c85c" strokeWidth="2" />
      <path d="M9 14V19" stroke="#8a6a1b" strokeWidth="1.5" />
    </>
  ),
  swatch: <rect x="2" y="2" width="20" height="20" fill="#fff" stroke="#111" strokeWidth="2" />,
  square: (
    <>
      <rect x="3" y="3" width="18" height="16" fill="none" stroke="#9aa0a8" strokeWidth="1.3" />
      <path d="M3 22H21" stroke="#9aa0a8" />
    </>
  ),
  moveLayer: (
    <>
      <path d="M8 3 2 12H14Z" fill="none" stroke="#c9cdd2" />
      <circle cx="11" cy="11" r="4.5" fill="#7e858e" stroke="#c9cdd2" />
      <path d="M6 18 10 15H21L17 18Z" fill="#6bb5ea" />
      <path d="M6 22 10 19H21L17 22Z" fill="#6bb5ea" />
      <path d="M16 3H21V8" stroke="#c9cdd2" fill="none" />
    </>
  ),
  gDel: (
    <>
      <path d="M5 2H2V22H5M15 2H18V22H15" stroke="#c9cdd2" fill="none" />
      <rect x="6" y="4" width="8" height="7" fill="#4f7da6" />
      <circle cx="10" cy="16" r="4" fill="#8d939c" />
      <path d="M15 11 23 19M23 11 15 19" stroke="#e04c4c" strokeWidth="2.2" />
    </>
  ),
  gEdit: (
    <>
      <path d="M5 2H2V22H5M15 2H18V22H15" stroke="#c9cdd2" fill="none" />
      <rect x="6" y="4" width="8" height="7" fill="#4f7da6" />
      <circle cx="10" cy="16" r="3.5" fill="#8d939c" />
      <path d="M14 22 20 12 23 14 17 24Z" fill="#e89a5c" />
    </>
  ),
  gSel: (
    <>
      <path d="M5 2H2V22H5M13 2H16V22H13" stroke="#d5d7da" fill="none" />
      <rect x="6" y="4" width="6" height="6" fill="#3f8a74" />
      <circle cx="9" cy="15" r="3.5" fill="#3f8a74" />
      <path d="M13 10V24L16 20H22Z" fill="#fff" />
    </>
  ),
  plusBox: (
    <>
      <rect x="2" y="2" width="20" height="20" fill="#e6e6e6" />
      <path d="M6 12H18M12 6V18" stroke="#222" strokeWidth="3" />
    </>
  ),
  folder: (
    <>
      <path d="M3 4H9L11 7H20V10H7L3 20Z" fill="#c9c9c9" />
      <path d="M7 10H24L19 22H2Z" fill="#e3e3e3" />
    </>
  ),
  home: <path d="M12 3 23 12H20V21H14V15H10V21H4V12H1Z" fill="#7d858e" />,
  cmdX: (
    <L c="#d5d7da" w={2.2}>
      <path d="M6 6 18 18M18 6 6 18" />
    </L>
  ),
  wrench: <path d="M3 19 13 9Q12 3 19 2L15 6 18 9 22 5Q21 12 15 11L5 21Z" fill="#d5d7da" />,
  cmdBox: (
    <>
      <rect x="1" y="4" width="21" height="16" fill="#d0d2d4" stroke="#55585c" />
      <path d="M1 8H22" stroke="#55585c" />
      <path d="M4 12 7 14 4 16" stroke="#444" fill="none" />
    </>
  ),
  navWheel: (
    <L c="#3d454e" w={1.3}>
      <path d="M12 1Q23 1 24 10V14Q24 23 12 23T1 12 12 1Z" />
      <circle cx="12" cy="12" r="7" />
      <circle cx="12" cy="12" r="3.5" />
    </L>
  ),
  navHand: (
    <L c="#3d454e" w={1.3}>
      <path d="M5 15 2 10 4 9 7 12V4H9V11M9 2H11V11M11 3H13V11M13 5H15.5V12L18 9 20 10 16 19Q14 22 10 22H8Z" />
    </L>
  ),
  navZoom: (
    <L c="#3d454e" w={1.4}>
      <path d="M2 2 14 14M14 2 2 14M2 6V2H6M14 6V2H10M2 10V14H6" />
      <circle cx="17" cy="17" r="4.5" />
      <path d="M20 20 24 24" strokeWidth="2" />
    </L>
  ),
  navOrbit: (
    <L c="#3d454e" w={1.3}>
      <path d="M12 1V23M9 5 12 1 15 5" />
      <rect x="9" y="5" width="6" height="14" rx="3" />
      <ellipse cx="12" cy="13" rx="11" ry="5" />
    </L>
  ),
  navShow: (
    <L c="#3d454e" w={1.1}>
      <path d="M1 1H7V7H1ZM9 1H15V7H9ZM17 1H23V7H17Z" />
      <path d="M2 10H20V23H2Z" />
      <path d="M8 12 15 16.5 8 21Z" fill="#3d454e" />
    </L>
  ),
  stGrid: (
    <L c="#d5d7da" w={1.2}>
      <path d="M4 1V22H23M4 14H13V22" />
    </L>
  ),
  stPolar: (
    <L c="#c4c7cb" w={1.3}>
      <circle cx="11" cy="13" r="8" />
      <path d="M4 20 21 3M11 13H22" />
    </L>
  ),
  stTrack: (
    <>
      <path d="M12 1V23" stroke="#6fbf6e" strokeWidth="1.2" />
      <path d="M6 6 18 20" stroke="#d46a6a" strokeWidth="1.2" />
    </>
  ),
  stAngle: (
    <L c="#e8eef5" w={1.6}>
      <path d="M20 2 4 20H22" />
    </L>
  ),
  stOsnap: (
    <L c="#e8eef5" w={1.4}>
      <path d="M5 5H21V23H5Z" />
      <rect x="2" y="1" width="6" height="6" />
    </L>
  ),
  stPlus: <path d="M11 1H13V11H23V13H13V23H11V13H1V11H11Z" fill="#e2e4e7" />,
  stShapes: (
    <L c="#c9cdd2" w={1.1}>
      <rect x="2" y="2" width="9" height="9" />
      <circle cx="18" cy="9" r="4.5" />
      <path d="M7 14 12 22H2Z" />
    </L>
  ),
  stBlocks: (
    <>
      <rect x="3" y="2" width="9" height="9" fill="#d9dbde" />
      <rect x="3" y="12" width="9" height="10" fill="#d9dbde" />
      <rect x="13" y="12" width="9" height="10" fill="#d9dbde" />
    </>
  ),
  stLockBlocks: (
    <>
      <rect x="4" y="8" width="8" height="8" fill="#d9dbde" />
      <rect x="8" y="14" width="8" height="8" fill="#bfc3c8" />
      <path d="M13 12V8A3 3 0 0 1 20 8V12" fill="none" stroke="#d9dbde" />
      <path d="M5 1V6M2.5 3.5H7.5" stroke="#d9dbde" />
    </>
  ),
  stPin: (
    <>
      <path d="M7 4A4 4 0 0 1 15 4V16H11V5" fill="none" stroke="#eaf1f8" strokeWidth="1.6" />
      <rect x="13" y="13" width="9" height="9" fill="#f2f4f6" />
    </>
  ),
  stAnno: (
    <>
      <path d="M4 2H17V20H4Z" fill="#f3ead8" />
      <path d="M9 3H13V14H9Z" fill="#c96f24" />
      <path d="M8 17H12L13 14H9Z" fill="#8f4512" />
      <circle cx="16" cy="21" r="2.4" fill="none" stroke="#d5d7da" />
      <circle cx="20" cy="21" r="2.4" fill="none" stroke="#d5d7da" />
    </>
  ),
  stDwg: (
    <>
      <path d="M12 1 21 6V14L12 20 3 14V6Z" fill="#4f93cc" />
      <path d="M12 1V12M3 8H21" stroke="#fff" strokeWidth="1.3" />
      <path d="M3 14H13V23H3Z" fill="#e6b84f" />
      <path d="M10 18 14 22 23 11" fill="none" stroke="#5dc25d" strokeWidth="3" />
    </>
  ),
  stMenu: <path d="M1 3H23V6H1ZM1 10.5H23V13.5H1ZM1 18H23V21H1Z" fill="#d9dbde" />,
  winLogo: <path d="M1 4 10 2.8V11.5H1ZM11.5 2.6 23 1V11.5H11.5ZM1 13H10V21.5L1 20ZM11.5 13H23V23L11.5 21.7Z" fill="#f4f4f8" />,
  taskSearch: (
    <L c="#f0f0f5" w={1.6}>
      <circle cx="14" cy="9" r="7" />
      <path d="M9 14 2 23" />
    </L>
  ),
  chrome: (
    <>
      <circle cx="12" cy="12" r="11" fill="#d9453a" />
      <path d="M12 12 2.5 17A11 11 0 0 0 14 23Z" fill="#4aa652" />
      <path d="M12 12 14 23A11 11 0 0 0 23 10Z" fill="#f0c33c" />
      <circle cx="12" cy="12" r="5" fill="#fff" />
      <circle cx="12" cy="12" r="3.8" fill="#4a88e0" />
    </>
  ),
  taskFolder: (
    <>
      <path d="M3 2H20V23H3Z" fill="#f0cb5a" />
      <path d="M3 2H12V8H3Z" fill="#f7e39a" />
      <path d="M7 14H16V23H7Z" fill="#3f7fb8" />
    </>
  ),
  solidworks: (
    <>
      <path d="M4 5 18 1 22 15 10 23 3 19Z" fill="#c3201f" />
      <text x="12" y="16" textAnchor="middle" fontSize="10" fontWeight="700" fontFamily="Liberation Sans" fill="#fff">
        SW
      </text>
    </>
  ),
  acadTask: (
    <>
      <rect x="3" y="1" width="18" height="22" fill="#f4e7e7" />
      <path d="M10 3H14L19 21H15.5L14.5 16H9.5L8.5 21H5ZM12 7 10.3 13H13.7Z" fill="#d22b2b" fillRule="evenodd" />
    </>
  ),
  acadLogo: <path d="M9 0H15L23 24H17L15.5 18H8.5L7 24H1ZM12 7 10 14H14Z" fill="#b8202a" fillRule="evenodd" />,
  trayUp: (
    <L c="#eee" w={1.3}>
      <path d="M4 16 12 7 20 16" />
    </L>
  ),
  trayUpdate: (
    <>
      <rect x="4" y="1" width="16" height="20" fill="none" stroke="#e8e8f0" strokeWidth="1.4" />
      <path d="M9 8Q12 5 15 8M15 13Q12 16 9 13" stroke="#e8e8f0" fill="none" />
      <circle cx="18" cy="19" r="4.5" fill="#2f8fe0" />
    </>
  ),
  trayWifi: (
    <L c="#d6d6e4" w={1.2}>
      <path d="M20 2Q5 6 3 22M20 8Q10 10 8 22M20 14Q15 15 14 22" />
    </L>
  ),
  trayBattery: (
    <>
      <rect x="3" y="6" width="17" height="12" fill="none" stroke="#eee" strokeWidth="1.4" />
      <rect x="5" y="8" width="9" height="8" fill="#eee" />
      <path d="M21 10V14" stroke="#eee" strokeWidth="1.5" />
    </>
  ),
  traySound: (
    <L c="#e8e8f0" w={1.2}>
      <path d="M2 9H6L11 4V20L6 15H2Z" />
      <path d="M15 9 21 15M21 9 15 15" />
    </L>
  ),
  trayPen: (
    <L c="#e8e8f0" w={1.3}>
      <path d="M4 22Q12 15 13 7T17 3 18 9 10 19 5 23M15 10Q21 11 21 14" />
    </L>
  ),
  trayNote: (
    <>
      <path d="M3 1H21V20H14L12 23 10 20H3Z" fill="#f2f2f6" />
      <path d="M7 6H17M7 10H17M7 14H13" stroke="#444" strokeWidth="1.3" />
    </>
  ),
};

const BIG_ICONS: Record<string, React.ReactNode> = {
  box: (
    <>
      <path d="M0 10 8 0H40V32L32 40H0Z" fill="#e3e3e3" />
      <path d="M0 10 8 0H40L32 10Z" fill="#f6f6f6" />
      <path d="M32 10 40 0V32L32 40Z" fill="#bdbdbd" />
    </>
  ),
  extrude: (
    <>
      <path d="M0 10 8 0H32V28L24 38H0Z" fill="#74b9ee" />
      <path d="M0 10 8 0H32L24 10Z" fill="#a8d4f5" />
      <path d="M24 10 32 0V28L24 38Z" fill="#4d9bda" />
      <path d="M0 33H24V40H0Z" fill="#d6d6d6" />
      <path d="M36 3V36M33 8 36 1 39 8Z" stroke="#f2f2f2" fill="#f2f2f2" />
    </>
  ),
  smooth: (
    <>
      <ellipse cx="20" cy="20" rx="19" ry="20" fill="#ecc766" />
      <path d="M20 0Q32 20 20 40M20 0Q8 20 20 40M2 14H38M2 26H38" fill="none" stroke="#b99438" strokeWidth=".9" />
    </>
  ),
  culling: (
    <>
      <path d="M2 42 42 4V40L36 42Z" fill="#d7d7d7" />
      <g fill="none" stroke="#8cc8ee" strokeWidth="1.2">
        <path d="M2 10H36V42H2ZM2 10 10 4H42V36L36 42M12 10V42M24 10V42M2 20H36M2 30H36M12 10 20 4M24 10 32 4" />
      </g>
    </>
  ),
  noFilter: (
    <>
      <path d="M2 10 10 0H40V32L32 40H2Z" fill="#74b9ee" />
      <path d="M2 10 10 0H40L32 10Z" fill="#eeeeee" />
      <path d="M32 10 40 0V32L32 40Z" fill="#cfcfcf" />
      <path d="M2 12H32V16H2Z" fill="#2d5e86" />
      <rect y="37" width="3" height="3" fill="#74b9ee" />
    </>
  ),
  gizmo: (
    <g fill="none" strokeWidth="1.3">
      <path d="M20 3 38 14V32L20 42 2 32V14Z" stroke="#9ba0a7" />
      <path d="M20 8V24M6 32 20 24 34 32" stroke="#9ba0a7" />
      <rect x="17" y="1" width="6" height="6" stroke="#7fb9e8" />
      <rect x="17" y="20" width="6" height="6" stroke="#c9cdd2" />
      <rect x="1" y="26" width="6" height="6" stroke="#69b86a" />
      <rect x="33" y="26" width="6" height="6" stroke="#c96a6a" />
    </g>
  ),
  group: (
    <>
      <path d="M6 8H1V42H6M27 8H32V42H27" fill="none" stroke="#d5d7da" strokeWidth="1.2" />
      <rect x="8" y="12" width="15" height="13" fill="#4f7da6" stroke="#8cbbe0" />
      <circle cx="16" cy="33" r="7" fill="#8d939c" />
      <path
        d="M33 0 35 7 41 3 38 10 44 12 38 14 41 21 35 17 33 24 31 17 25 21 28 14 22 12 28 10 25 3 31 7Z"
        fill="#f3bd45"
      />
    </>
  ),
  base: <path d="M2 2H18V16H42V38H2Z" fill="#dcdcdc" />,
};

const Ic = ({ n, s = 24 }: { n: string; s?: number }) => (
  <IconSvg width={s} height={s} viewBox="0 0 24 24">
    {ICONS[n]}
  </IconSvg>
);
const Big = ({ n, w = 40, h = 40 }: { n: string; w?: number; h?: number }) => (
  <IconSvg width={w} height={h} viewBox={`0 0 ${w} ${h}`}>
    {BIG_ICONS[n]}
  </IconSvg>
);

// a run of icons in cells of given widths, "v" gives a dropdown caret
const Cells = ({ w, n, s = 22 }: { w: number[]; n: string[]; s?: number }) => (
  <>
    {n.map((name, i) => (
      <Slot key={i} $w={w[i]}>
        {name === "v" ? <Caret /> : <Ic n={name} s={s} />}
      </Slot>
    ))}
  </>
);

const PanelBase = ({
  title,
  w,
  caret,
  launcher,
  children,
}: {
  title: string;
  w: number;
  caret?: boolean;
  launcher?: boolean;
  children: React.ReactNode;
}) => (
  <Panel $w={w}>
    <PanelBody>{children}</PanelBody>
    <PanelFooter $launcher={launcher}>
      <span>{title}</span>
      {caret && <Caret $big />}
      {launcher && (
        <Launcher>
          <Ic n="launcher" s={9} />
        </Launcher>
      )}
    </PanelFooter>
  </Panel>
);

const Bearing = () => (
  <svg width="690" height="650" viewBox="0 0 1591 1568" preserveAspectRatio="none" style={{ display: "block" }}>
    <defs>
      <linearGradient id="body" x1="0" y1="0" x2="0" y2="1">
        <stop offset="0" stopColor="#222222" />
        <stop offset=".45" stopColor="#303030" />
        <stop offset=".6" stopColor="#3a3a3a" />
        <stop offset="1" stopColor="#2b2b2b" />
      </linearGradient>
      <linearGradient id="bore" x1="0" y1="0" x2="0" y2="1">
        <stop offset="0" stopColor="#212121" />
        <stop offset=".55" stopColor="#2c2c2c" />
        <stop offset="1" stopColor="#3a3a3a" />
      </linearGradient>
      <linearGradient id="ballH" x1="0" y1="0" x2="1" y2="0">
        <stop offset="0" stopColor="#c4c4c4" />
        <stop offset=".45" stopColor="#f0f0f0" />
        <stop offset="1" stopColor="#a6a6a6" />
      </linearGradient>
      <linearGradient id="ballV" x1="0" y1="0" x2="0" y2="1">
        <stop offset="0" stopColor="#8f8f8f" />
        <stop offset=".42" stopColor="#ffffff" />
        <stop offset="1" stopColor="#6f6f6f" />
      </linearGradient>
      <linearGradient id="ballD" x1="0" y1="0" x2="1" y2="1">
        <stop offset="0" stopColor="#b8b8b8" />
        <stop offset=".45" stopColor="#fafafa" />
        <stop offset=".6" stopColor="#c9c9c9" />
        <stop offset="1" stopColor="#8e8e8e" />
      </linearGradient>
      <linearGradient id="ballU" x1="0" y1="1" x2="1" y2="0">
        <stop offset="0" stopColor="#bcbcbc" />
        <stop offset=".5" stopColor="#fbfbfb" />
        <stop offset="1" stopColor="#9a9a9a" />
      </linearGradient>
      <clipPath id="boreClip">
        <ellipse cx="661" cy="780" rx="264" ry="325" />
      </clipPath>
    </defs>
    {/* outer cylinder */}
    <path d="M660 30H908A605 750 0 0 1 908 1530H660Z" fill="url(#body)" />
    <path d="M908 30A605 750 0 0 1 908 1530" fill="none" stroke="#1a1a1a" strokeWidth="2" />
    {/* front ring */}
    <ellipse cx="660" cy="780" rx="605" ry="750" fill="#3d3d3d" />
    <ellipse cx="660" cy="780" rx="596" ry="738" fill="none" stroke="#444444" strokeWidth="5" />
    <ellipse cx="690" cy="780" rx="540" ry="640" fill="#353535" stroke="#424242" strokeWidth="4" />
    <ellipse cx="705" cy="780" rx="490" ry="610" fill="#2e2e2e" />
    <ellipse cx="730" cy="780" rx="430" ry="540" fill="#272727" />
    {/* cage pockets */}
    <path d="M555 265 L610 310 L610 230Z M900 235 L960 280 L920 335Z M555 1300 L610 1250 L610 1330Z M900 1330 L955 1270 L910 1230Z" fill="#404040" />
    {/* balls */}
    <path d="M612 200Q660 190 680 160Q780 170 900 232L895 322L860 350L690 282L640 290L612 305Z" fill="url(#ballH)" />
    <path d="M612 305Q640 278 690 280L880 322L855 350Q740 322 640 322Z" fill="#9a9a9a" />
    <path d="M310 430Q330 350 430 265L540 260L600 322Q470 340 410 400L360 530Q310 480 310 430Z" fill="url(#ballD)" />
    <path d="M965 285L920 340Q960 450 1000 480L1140 580Q1100 400 965 285Z" fill="url(#ballD)" />
    <path d="M205 770Q210 690 300 650L285 770L320 950Q210 900 205 770Z" fill="url(#ballV)" />
    <path d="M1100 640L1140 610Q1170 700 1170 780Q1170 880 1130 965Q1100 900 1100 800Z" fill="url(#ballV)" />
    <path d="M360 1030Q310 1090 310 1130Q350 1230 540 1300L590 1240L630 1240Q470 1210 400 1100Z" fill="url(#ballD)" />
    <path d="M400 1090Q450 1190 570 1215L470 1200Q410 1160 380 1080Z" fill="#f4f4f4" />
    <path d="M1140 985Q1040 1040 920 1220L970 1280Q1080 1150 1140 985Z" fill="url(#ballU)" />
    <path d="M612 1250Q650 1240 700 1235Q780 1200 850 1215L895 1260L895 1330Q800 1380 690 1405L612 1370Z" fill="url(#ballH)" />
    <path d="M612 1250Q640 1245 670 1250L670 1285Q630 1280 612 1290Z" fill="#8d8d8d" />
    {/* inner ring */}
    <ellipse cx="702" cy="780" rx="398" ry="450" fill="#303030" />
    <ellipse cx="672" cy="780" rx="368" ry="450" fill="#3b3b3b" />
    <ellipse cx="661" cy="780" rx="264" ry="325" fill="url(#bore)" />
    <ellipse cx="870" cy="780" rx="230" ry="300" fill="#1f2934" clipPath="url(#boreClip)" />
    {/* ucs triad */}
    <rect x="660" y="772" width="116" height="18" fill="#4ea04e" />
    <rect x="790" y="772" width="70" height="18" fill="#8a3b3f" />
    <rect x="775" y="630" width="15" height="160" fill="#4d8fd8" />
    <path d="M650 740 682 768M682 740 650 768" stroke="#5fb55f" strokeWidth="1.5" fill="none" />
    <path d="M848 738 884 776M884 738 848 776" stroke="#c94a4a" strokeWidth="1.5" fill="none" />
  </svg>
);

const CompassLetter = ({ x, y, s, children }: { x: number; y: number; s: number; children: React.ReactNode }) => (
  <text
    x={x}
    y={y}
    textAnchor="middle"
    dominantBaseline="central"
    fontSize={s}
    fontWeight="700"
    fontFamily="Liberation Sans"
    fill="#f0f0f0"
    transform={`rotate(90 ${x} ${y})`}
  >
    {children}
  </text>
);

const ViewCube = () => (
  <svg width="110" height="165" viewBox="0 0 110 165" style={{ display: "block" }}>
    <defs>
      <linearGradient id="cubeFace" x1="0" y1="0" x2="0" y2="1">
        <stop offset="0" stopColor="#e8e8e8" />
        <stop offset="1" stopColor="#bfbfbf" />
      </linearGradient>
    </defs>
    <path d="M5 50 Q30 54 49 50 Q62 53 75 50 V103 Q62 100 49 103 Q25 100 5 103Z" fill="url(#cubeFace)" />
    <ellipse cx="61" cy="76" rx="30" ry="68" fill="none" stroke="#5a6068" strokeWidth="8" opacity=".88" />
    <rect x="40" y="57" width="15" height="36" fill="#a9adb3" opacity=".9" />
    <path d="M49 50V103" stroke="#111" strokeWidth="1" />
    <rect x="23" y="68" width="14" height="21" rx="2" fill="#4d8fdc" />
    <text x="20" y="83" textAnchor="middle" fontSize="13" fontWeight="700" fontFamily="Liberation Sans" fill="#111">
      L
    </text>
    <text x="31" y="82" textAnchor="middle" fontSize="8" fontFamily="Liberation Sans" fill="#dfe8f4" textLength="11">
      EFT
    </text>
    <text x="63" y="81" textAnchor="middle" fontSize="9" fontFamily="Liberation Sans" fill="#222" textLength="18" lengthAdjust="spacingAndGlyphs">
      FRONT
    </text>
    <CompassLetter x={61} y={15} s={15}>
      W
    </CompassLetter>
    <CompassLetter x={91} y={76} s={12}>
      S
    </CompassLetter>
    <CompassLetter x={61} y={138} s={15}>
      E
    </CompassLetter>
  </svg>
);

const RIBBON_TABS = [
  "Home",
  "Solid",
  "Surface",
  "Mesh",
  "Visualize",
  "Parametric",
  "Insert",
  "Annotate",
  "View",
  "Manage",
  "Output",
  "Add-ins",
  "Collaborate",
  "Express Tools",
  "Featured Apps",
];

const DETAILS = [
  "File name: ball bearing",
  "",
  "Autosave file: ball bearing_1_8533_",
  "56807942.sv$",
  "Last saved: 01 October 2021  12:56:30",
  "",
  "Original file: ball bearing.dwg",
  "Last saved: 01 October 2021  12:36:09",
  "",
  "Backup file: ball bearing.bak",
  "Last saved: 01 October 2021  12:31:12",
];

const App = () => {
  return (
    <Window>
      <GlobalStyle />
      <Frame>
        <TitleBar>
          <Gap $w={7} />
          <Ic n="acadLogo" s={20} />
          <LogoMark>
            <LogoLetter>M</LogoLetter>
            <Caret />
          </LogoMark>
          <Gap $w={7} />
          <Cells w={[30, 30, 30, 30, 30, 30, 30]} n={["fnew", "fopen", "fsave", "fsaveas", "fcloud", "fimport", "fprint"]} s={22} />
          <Cells w={[28, 20, 26, 20, 24, 12]} n={["undo", "v", "redo", "v", "wspace", "v"]} />
          <Gap $w={6} />
          <WorkspaceBox>
            <Ic n="gear" s={20} />
            <ComboText>3D Modeling</ComboText>
            <Caret />
          </WorkspaceBox>
          <Slot $w={20}>
            <Caret />
          </Slot>
          <Slot $w={26}>
            <Ic n="plane" s={20} />
          </Slot>
          <ShareText>Share</ShareText>
          <Gap $w={94} />
          <TitleText>AutoCAD Mechanical 2022</TitleText>
          <Gap $w={16} />
          <TitleText>ball bearing.dwg</TitleText>
          <Gap $w={86} />
          <RightCaret />
          <Gap $w={7} />
          <SearchBox>Type a keyword or phrase</SearchBox>
          <Slot $w={28}>
            <Ic n="search" s={20} />
          </Slot>
          <Slot $w={33}>
            <Ic n="user" s={20} />
          </Slot>
          <TitleText>Sign In</TitleText>
          <Gap $w={62} />
          <Caret />
          <Gap $w={8} />
          <Slot $w={28}>
            <Ic n="cart" s={18} />
          </Slot>
          <Slot $w={26}>
            <Ic n="a360" s={18} />
          </Slot>
          <Caret />
          <Gap $w={13} />
          <TitleSeparator />
          <Slot $w={46}>
            <Ic n="help" s={21} />
          </Slot>
          <Caret />
          <Gap $w={80} />
          <Cells w={[34, 30, 30]} n={["winMin", "winMax", "winClose"]} s={20} />
        </TitleBar>

        <RibbonTabs>
          {RIBBON_TABS.map((t) => (
            <RibbonTab key={t} $active={t === "Home"}>
              {t}
            </RibbonTab>
          ))}
          <CollapseSlot $w={26}>
            <CollapseBox />
          </CollapseSlot>
          <CollapseCaret />
        </RibbonTabs>

        <Ribbon>
          <PanelBase title="Modeling" w={234} caret>
            <BigButton $w={60}>
              <Big n="box" />
              <BigLabel>Box</BigLabel>
              <Caret />
            </BigButton>
            <BigButton $w={66}>
              <Big n="extrude" />
              <BigLabel>Extrude</BigLabel>
              <Caret />
            </BigButton>
            <PanelRows $w={108} $pl={7}>
              <Row>
                <Slot $w={30}>
                  <Ic n="polysolid" s={22} />
                </Slot>
                <RowLabel>Polysolid</RowLabel>
              </Row>
              <Row>
                <Slot $w={30}>
                  <Ic n="presspull" s={22} />
                </Slot>
                <RowLabel>Presspull</RowLabel>
              </Row>
            </PanelRows>
          </PanelBase>

          <PanelBase title="Mesh" w={97} launcher>
            <BigButton $w={64}>
              <Big n="smooth" />
              <BigLabel $mt={5}>
                Smooth
                <br />
                Object
              </BigLabel>
            </BigButton>
            <PanelRows $w={30}>
              <Row>
                <Slot $w={28}>
                  <Ic n="meshAdd" s={22} />
                </Slot>
              </Row>
              <Row>
                <Slot $w={28}>
                  <Ic n="meshSub" s={22} />
                </Slot>
              </Row>
              <Row>
                <Slot $w={28}>
                  <Ic n="meshEdit" s={22} />
                </Slot>
              </Row>
            </PanelRows>
          </PanelBase>

          <PanelBase title="Solid Editing" w={214} caret>
            <PanelRows>
              <Row>
                <Cells w={[34, 35, 28]} n={["se1", "se2", "extract"]} s={24} />
                <RowLabel $ml={3} $mr={9}>
                  Extract Edges
                </RowLabel>
                <Caret />
              </Row>
              <Row>
                <Cells w={[34, 35, 28]} n={["se3", "se4", "extfaces"]} s={24} />
                <RowLabel $ml={3} $mr={9}>
                  Extrude Faces
                </RowLabel>
                <Caret />
              </Row>
              <Row>
                <Cells w={[34, 35, 28]} n={["se5", "se6", "separate"]} s={24} />
                <RowLabel $ml={3} $mr={9}>
                  Separate
                </RowLabel>
                <Caret />
              </Row>
            </PanelRows>
          </PanelBase>

          <PanelBase title="Draw" w={117} caret>
            <PanelRows>
              <Row>
                <Cells w={[34, 28, 42, 8]} n={["d1", "d2", "d3", "v"]} />
              </Row>
              <Row>
                <Cells w={[34, 28, 42, 8]} n={["d4", "d5", "d6", "v"]} />
              </Row>
              <Row>
                <Cells w={[34, 28, 42, 8]} n={["d7", "d8", "d9", "v"]} />
              </Row>
            </PanelRows>
          </PanelBase>

          <PanelBase title="Modify" w={181} caret>
            <PanelRows>
              <Row>
                <Cells w={[34, 36, 24, 46, 14, 27]} n={["m1", "m2", "move", "m4", "trim", "v"]} />
              </Row>
              <Row>
                <Cells w={[34, 36, 24, 46, 14, 27]} n={["m6", "m7", "rotate", "m9", "fillet", "v"]} />
              </Row>
              <Row>
                <Cells w={[34, 36, 24, 46, 14, 27]} n={["eraser", "m12", "m13", "m14", "m15", "v"]} />
              </Row>
            </PanelRows>
          </PanelBase>

          <PanelBase title="Coordinates" w={181} launcher>
            <PanelRows>
              <Row>
                <Cells w={[32, 12, 48, 18, 46, 16]} n={["c1", "v", "c2", "c3", "c4", "c5"]} />
              </Row>
              <Row>
                <Cells w={[32, 12, 48, 18, 46, 16]} n={["c6", "v", "c7", "c8", "c9", "c10"]} />
              </Row>
              <Row>
                <Cells w={[32, 12]} n={["c11", "v"]} />
                <Combo $w={124} $ml={9}>
                  <Ic n="cubeLeft" s={22} />
                  <ComboText>Left</ComboText>
                  <Caret $big />
                </Combo>
              </Row>
            </PanelRows>
          </PanelBase>

          <PanelBase title="View" w={240} caret>
            <PanelRows>
              <Row>
                <Combo $w={231} $ml={4}>
                  <Ic n="styleReal" s={20} />
                  <ComboText>Realistic</ComboText>
                  <Caret $big />
                </Combo>
              </Row>
              <Row>
                <Combo $w={231} $ml={4}>
                  <Ic n="viewBox" s={20} />
                  <ComboText>Unsaved View</ComboText>
                  <Caret $big />
                </Combo>
              </Row>
              <Row>
                <ViewportSlot $w={28}>
                  <Ic n="viewport" s={20} />
                </ViewportSlot>
                <RowLabel $ml={2} $mr={9}>
                  Single viewport
                </RowLabel>
                <Caret />
              </Row>
            </PanelRows>
          </PanelBase>

          <PanelBase title="Selection" w={213}>
            <CullingButton $w={54} $ml={2}>
              <Big n="culling" w={42} h={42} />
              <BigLabel $mt={3}>Culling</BigLabel>
            </CullingButton>
            <BigButton $w={70} $ml={6}>
              <Big n="noFilter" />
              <BigLabel>No Filter</BigLabel>
              <Caret />
            </BigButton>
            <BigButton $w={72} $ml={6}>
              <Big n="gizmo" />
              <BigLabel>
                Move
                <br />
                Gizmo
              </BigLabel>
            </BigButton>
            <GizmoCaret />
          </PanelBase>

          <PanelBase title="Layers" w={266} caret>
            <PanelRows>
              <Row>
                <Cells w={[30, 37, 33, 32, 33, 30, 35, 32]} n={["l1", "l2", "l3", "l4", "l5", "l6", "l7", "l8"]} />
              </Row>
              <Row>
                <Combo $w={258} $ml={4}>
                  <Cells w={[22, 24, 24, 26]} n={["bulb", "sun", "lock", "swatch"]} s={19} />
                  <ComboText>0</ComboText>
                  <Caret $big />
                </Combo>
              </Row>
              <Row>
                <Cells w={[34, 12, 32]} n={["square", "v", "moveLayer"]} />
                <RowLabel $ml={0} $mr={10}>
                  Move to Another Layer
                </RowLabel>
                <Caret />
              </Row>
            </PanelRows>
          </PanelBase>

          <PanelBase title="Groups" w={86} caret>
            <BigButton $w={52}>
              <Big n="group" w={46} h={40} />
              <BigLabel>Group</BigLabel>
            </BigButton>
            <PanelRows $w={30}>
              <Row>
                <Slot $w={28}>
                  <Ic n="gDel" s={20} />
                </Slot>
              </Row>
              <Row>
                <Slot $w={28}>
                  <Ic n="gEdit" s={20} />
                </Slot>
              </Row>
              <Row>
                <SelectedBox>
                  <Ic n="gSel" s={20} />
                </SelectedBox>
              </Row>
            </PanelRows>
          </PanelBase>

          <PanelBase title="View" w={78} caret launcher>
            <BigButton $w={72}>
              <Big n="base" />
              <BigLabel>Base</BigLabel>
              <Caret />
            </BigButton>
          </PanelBase>
        </Ribbon>

        <DocBar>
          <DocTab $w={165} $pl={26}>
            Start
          </DocTab>
          <DocTab $w={145} $pl={10}>
            3d project
            <Ic n="tabClose" s={13} />
          </DocTab>
          <DocTab $w={181} $pl={14}>
            3d drone 1 attempt*
            <Ic n="tabClose" s={13} />
          </DocTab>
          <DocTab $w={149} $pl={14}>
            11
            <Ic n="tabClose" s={13} />
          </DocTab>
          <DocTab $w={149} $pl={12} $active>
            ball bearing*
            <Ic n="tabClose" s={13} />
          </DocTab>
          <AddTab>+</AddTab>
        </DocBar>

        <Main>
          <SidePanel>
            <PanelTitle>
              <Grip />
              DRAWING RECOVERY MANA...
            </PanelTitle>
            <SectionHeader $h={25}>
              Backup Files
              <Caret $big />
            </SectionHeader>
            <SectionBody $h={185}>
              <TreeRow>
                <Ic n="plusBox" s={11} />
                <Gap $w={6} />
                <Ic n="folder" s={20} />
                <TreeSelected>ball bearing</TreeSelected>
              </TreeRow>
            </SectionBody>
            <Sash>
              <SashDot />
              <SashDot />
              <SashDot />
              <SashDot />
              <SashDot />
            </Sash>
            <SectionHeader $h={26}>
              Details
              <Caret $big />
            </SectionHeader>
            <SectionBody $h={292}>
              <DetailsText>
                {DETAILS.map((line, i) => (
                  <DetailLine key={i}>{line}</DetailLine>
                ))}
              </DetailsText>
            </SectionBody>
            <VGap $h={10} />
            <SectionHeader $h={28}>
              Preview
              <Caret $big />
            </SectionHeader>
            <SectionBody $h={140} />
          </SidePanel>

          <Viewport>
            <BearingWrap>
              <Bearing />
            </BearingWrap>
            <Watermark>
              <WatermarkCjk>莫西网</WatermarkCjk>
              <WatermarkLatin>www. 3dmox. com</WatermarkLatin>
            </Watermark>
            <ViewLabel>[−][Custom View][Realistic]</ViewLabel>
            <ViewportControls>
              <Ic n="winMin" s={18} />
              <Ic n="winMax" s={14} />
              <Ic n="winClose" s={16} />
            </ViewportControls>
            <HomeIcon>
              <Ic n="home" s={17} />
            </HomeIcon>
            <CubeWrap>
              <ViewCube />
            </CubeWrap>
            <CubeMenu>
              <Caret $big $c="#b4b8bd" />
            </CubeMenu>
            <Unnamed>
              Unnamed
              <Caret $big $c="#8e93a0" />
            </Unnamed>
            <NavBar>
              <Ic n="navWheel" s={28} />
              <NavCaret>
                <Caret $c="#3d454e" />
              </NavCaret>
              <NavSeparator $mb={6} />
              <Ic n="navHand" s={27} />
              <VGap $h={5} />
              <Ic n="navZoom" s={29} />
              <NavCaret>
                <Caret $c="#3d454e" />
              </NavCaret>
              <VGap $h={7} />
              <Ic n="navOrbit" s={33} />
              <NavCaret>
                <Caret $c="#3d454e" />
              </NavCaret>
              <NavSeparator $mb={3} />
              <Ic n="navShow" s={31} />
            </NavBar>
            <CommandHint>Command:</CommandHint>
            <CommandLine>
              <CommandHandle>
                <Grip />
                <Ic n="cmdX" s={16} />
                <Gap $w={1} />
                <Ic n="wrench" s={20} />
              </CommandHandle>
              <CommandInput>
                <Ic n="cmdBox" s={20} />
                <Gap $w={2} />
                <Caret $c="#55585c" />
                <Gap $w={11} />
                Type a command
                <UpCaret $c="#55585c" />
              </CommandInput>
            </CommandLine>
          </Viewport>
        </Main>

        <BottomBar>
          <LayoutTabs>
            <LayoutTab $w={77} $active>
              Model
            </LayoutTab>
            <LayoutTab $w={76}>Layout1</LayoutTab>
            <LayoutTab $w={77}>Layout2</LayoutTab>
            <LayoutTab $w={24}>+</LayoutTab>
          </LayoutTabs>
          <StatusBar>
            <StatusGroup $w={60}>
              <StatusButton $w={60}>MODEL</StatusButton>
            </StatusGroup>
            <StatusGroup $w={130}>
              <StatusButton $w={28}>
                <Ic n="stGrid" s={22} />
              </StatusButton>
              <StatusButton $w={34}>
                <Ic n="stPolar" s={20} />
              </StatusButton>
              <StatusButton $w={14}>
                <Caret $big />
              </StatusButton>
              <StatusButton $w={36}>
                <Ic n="stTrack" s={20} />
              </StatusButton>
              <StatusButton $w={14}>
                <Caret $big />
              </StatusButton>
            </StatusGroup>
            <StatusGroup $w={80}>
              <StatusButton $w={30} $active>
                <Ic n="stAngle" s={20} />
              </StatusButton>
              <StatusButton $w={29} $active>
                <Ic n="stOsnap" s={20} />
              </StatusButton>
              <StatusButton $w={21}>
                <Caret $big />
              </StatusButton>
            </StatusGroup>
            <StatusGroup $w={51}>
              <StatusButton $w={34}>
                <Ic n="gear" s={22} />
              </StatusButton>
              <StatusButton $w={14}>
                <Caret $big />
              </StatusButton>
            </StatusGroup>
            <StatusGroup $w={30}>
              <StatusButton $w={30}>
                <Ic n="stPlus" s={20} />
              </StatusButton>
            </StatusGroup>
            <StatusGroup $w={30}>
              <StatusButton $w={30}>
                <Ic n="stShapes" s={22} />
              </StatusButton>
            </StatusGroup>
            <StatusGroup $w={91}>
              <StatusButton $w={31}>
                <Ic n="stBlocks" s={20} />
              </StatusButton>
              <StatusButton $w={31}>
                <Ic n="stLockBlocks" s={22} />
              </StatusButton>
              <StatusButton $w={29} $active>
                <Ic n="stPin" s={22} />
              </StatusButton>
            </StatusGroup>
            <StatusGroup $w={72}>
              <StatusButton $w={38}>
                <Ic n="stAnno" s={24} />
              </StatusButton>
              <StatusButton $w={30}>
                <Ic n="stDwg" s={24} />
              </StatusButton>
            </StatusGroup>
            <StatusGroup $w={30}>
              <StatusButton $w={30}>
                <Ic n="stMenu" s={20} />
              </StatusButton>
            </StatusGroup>
          </StatusBar>
        </BottomBar>
      </Frame>

      <Taskbar>
        <Gap $w={11} />
        <Ic n="winLogo" s={21} />
        <Gap $w={26} />
        <Ic n="taskSearch" s={21} />
        <Gap $w={15} />
        <TrayText $w={36}>Links</TrayText>
        <Gap $w={581} />
        <Ic n="chrome" s={20} />
        <Gap $w={26} />
        <Ic n="taskFolder" s={20} />
        <Gap $w={26} />
        <Ic n="solidworks" s={22} />
        <Gap $w={11} />
        <TaskActive>
          <Ic n="acadTask" s={21} />
        </TaskActive>
        <Gap $w={694} />
        <Ic n="trayUp" s={17} />
        <Gap $w={11} />
        <Ic n="trayUpdate" s={21} />
        <Gap $w={13} />
        <Ic n="trayWifi" s={18} />
        <Gap $w={11} />
        <Ic n="trayBattery" s={18} />
        <Gap $w={11} />
        <Ic n="traySound" s={18} />
        <Gap $w={17} />
        <Ic n="trayPen" s={20} />
        <Gap $w={14} />
        <TrayText $w={34}>ENG</TrayText>
        <Gap $w={14} />
        <TrayText $w={38}>10:02</TrayText>
        <Gap $w={22} />
        <Ic n="trayNote" s={20} />
      </Taskbar>
    </Window>
  );
};

export default App;
